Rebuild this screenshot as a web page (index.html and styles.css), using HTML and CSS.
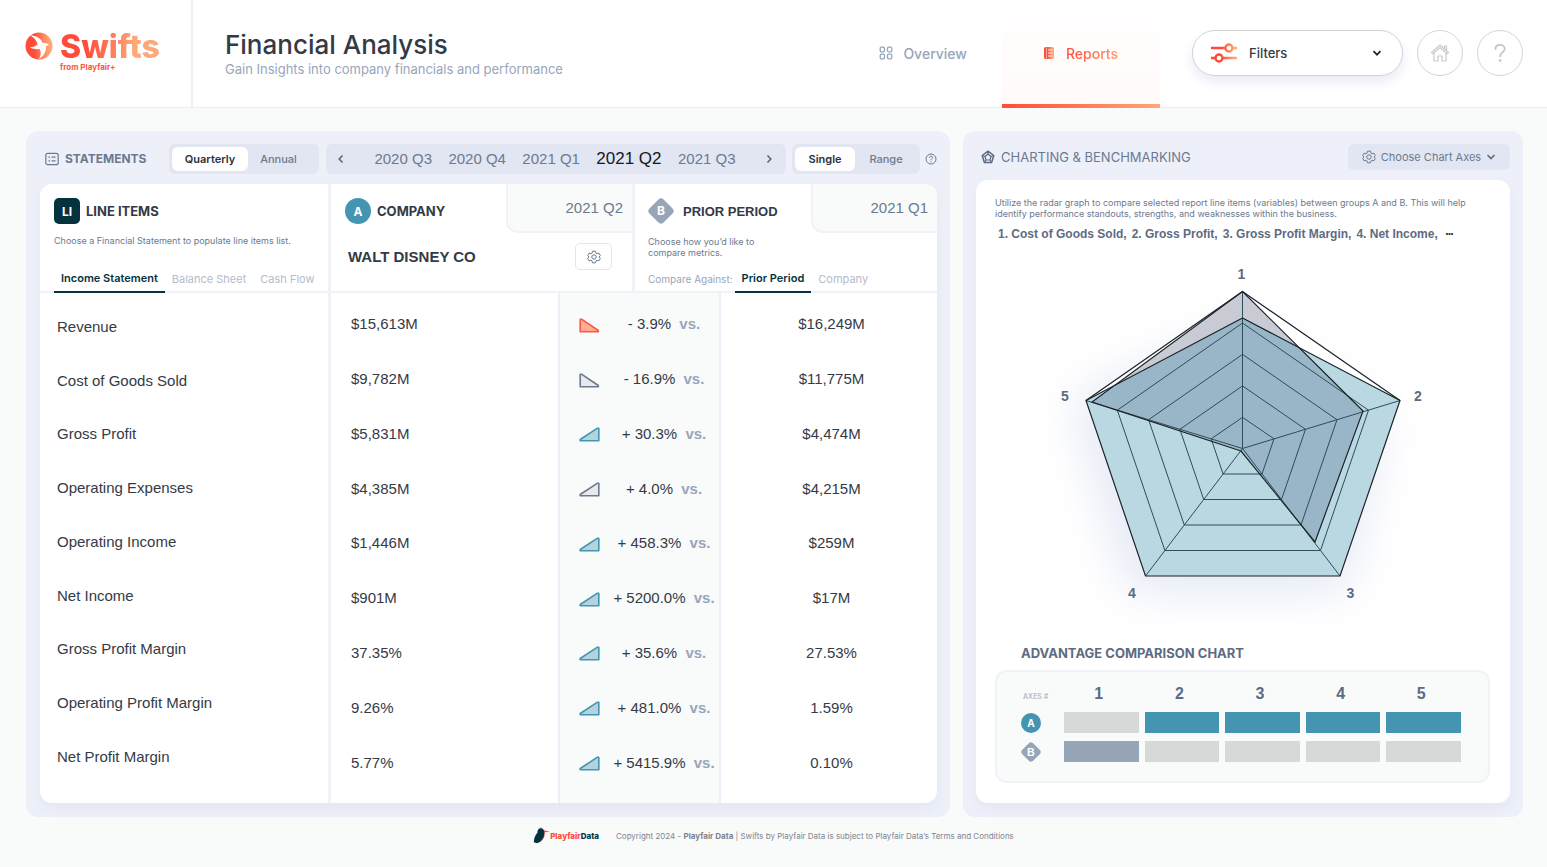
FILE: index.html
```html
<!DOCTYPE html>
<html lang="en">
<head>
<meta charset="utf-8">
<title>Financial Analysis</title>
<link rel="stylesheet" href="styles.css">
</head>
<body>
<header class="topbar">
  <a class="brand" href="#">
    <svg class="brand-mark" viewBox="0 0 28 28" aria-hidden="true">
      <defs><linearGradient id="warm"><stop offset=".3" stop-color="#ff4b3a"/><stop offset=".9" stop-color="#ffa877"/></linearGradient></defs>
      <circle cx="14" cy="14" r="13.500" fill="url(#warm)"/>
      <path d="M5 3.500C11 3.500 16 6 17.500 11C19.500 10.500 22 11 24 13L21 14C21.500 19 19 24 14 27C16 23 16.500 19.500 14.500 17C11 17.500 8 17 5 15.500C8 15 11 14 12.500 12.500C12.500 9 9 5.500 5 3.500Z" fill="#fff"/>
    </svg>
    <span class="brand-text"><span class="brand-name">Swifts</span><span class="brand-sub">from Playfair+</span></span>
  </a>
  <div class="heading">
    <h1>Financial Analysis</h1>
    <p>Gain Insights into company financials and performance</p>
  </div>
  <nav class="nav">
    <a class="nav-link" href="#">
      <svg class="i14" viewBox="0 0 14 14" fill="none" stroke="#97a6ba" stroke-width="1.300"><rect x="1.200" y="1.200" width="4.300" height="4.600" rx="1.200"/><rect x="8.500" y="1.200" width="4.300" height="4.600" rx="1.200"/><rect x="1.200" y="8.200" width="4.300" height="4.600" rx="1.200"/><rect x="8.500" y="8.200" width="4.300" height="4.600" rx="1.200"/></svg>
      Overview</a>
    <a class="nav-link active" href="#">
      <svg class="i14" viewBox="0 0 14 14"><rect x="2" y="1" width="10" height="12" rx="1.800" fill="url(#warm)"/><path d="M4.500 1.500v11" stroke="#fff" stroke-width=".5"/><path d="M6 4h4.500M6 7h4.500M6 10h4.500" stroke="#fff" stroke-width=".9"/></svg>
      <span>Reports</span></a>
  </nav>
  <div class="actions">
    <button class="filters" type="button">
      <svg class="sliders" viewBox="0 0 26 22" fill="none"><defs><linearGradient id="warmLine" gradientUnits="userSpaceOnUse" x1="0" y1="0" x2="26" y2="0"><stop offset=".4" stop-color="#ff4b3a"/><stop offset=".9" stop-color="#ffa877"/></linearGradient></defs><g stroke="url(#warmLine)" stroke-width="2.500"><path d="M0 6H14M22 6H26M0 16H4M12 16H26"/><circle cx="18" cy="6" r="3.500"/><circle cx="8" cy="16" r="3.500"/></g></svg>
      <span>Filters</span>
      <svg class="i10" viewBox="0 0 10 10" fill="none" stroke="#1f2430" stroke-width="1.700"><path d="M1.500 3.200 5 6.700 8.500 3.200"/></svg>
    </button>
    <button class="round" type="button" aria-label="Home"><svg class="i20" viewBox="0 0 20 20" fill="none" stroke="#c9cacd" stroke-width="1.200" stroke-linejoin="round"><path d="M1.500 9.500 10 2l8.500 7.500-1.300 1.200L10 4.500 2.800 10.700ZM4 10v8h4v-5h4v5h4v-8M14.500 5.500V3h2v4.500"/></svg></button>
    <button class="round" type="button" aria-label="Help"><svg class="i20" viewBox="0 0 20 20" fill="none" stroke="#c4c5c9" stroke-width="1.800" stroke-linecap="round"><path d="M5.500 6C5.500 3.200 7.500 1.800 10 1.800S14.700 3.400 14.700 6C14.700 9 10.200 9.500 10.200 13.200"/><circle cx="10.200" cy="17.500" r=".5"/></svg></button>
  </div>
</header>

<main class="page">
  <section class="panel statements">
    <div class="toolbar">
      <h2 class="panel-title strong"><svg class="i14" viewBox="0 0 14 14" fill="none" stroke="#6b7a90" stroke-width="1.200"><rect x=".8" y="1.300" width="12.400" height="11.400" rx="2"/><path d="M3.500 5.200h1.500M6.500 5.200h4M3.500 8.800h1.500M6.500 8.800h4"/></svg>STATEMENTS</h2>
      <div class="segment seg-frequency"><button class="on" type="button">Quarterly</button><button type="button">Annual</button></div>
      <div class="periods">
        <button class="arrow" type="button" aria-label="Previous periods"><svg class="i10" viewBox="0 0 10 10" fill="none" stroke="#5d6a7e" stroke-width="1.600"><path d="M6.500 1.500 3.200 5l3.300 3.500"/></svg></button>
        <button type="button">2020 Q3</button><button type="button">2020 Q4</button><button type="button">2021 Q1</button><button class="current" type="button">2021 Q2</button><button type="button">2021 Q3</button>
        <button class="arrow" type="button" aria-label="Next periods"><svg class="i10" viewBox="0 0 10 10" fill="none" stroke="#5d6a7e" stroke-width="1.600"><path d="M3.500 1.500 6.800 5 3.500 8.500"/></svg></button>
      </div>
      <div class="segment seg-mode"><button class="on" type="button">Single</button><button type="button">Range</button></div>
      <button class="hint" type="button" aria-label="Help"><svg class="i12" viewBox="0 0 12 12" fill="none" stroke="#6b7a90"><circle cx="6" cy="6" r="5"/><path d="M4.400 4.800C4.400 2.600 7.600 2.700 7.600 4.700 7.600 5.900 6 5.800 6 7.300M6 8.300v1"/></svg></button>
    </div>

    <div class="statement">
      <section class="items">
        <div class="col-head">
          <h3><span class="badge badge-li">LI</span>LINE ITEMS</h3>
          <p class="note">Choose a Financial Statement to populate line items list.</p>
          <div class="tabs"><button class="on" type="button">Income Statement</button><button type="button">Balance Sheet</button><button type="button">Cash Flow</button></div>
        </div>
        <table class="item-table">
          <tr><th scope="row">Revenue</th></tr>
          <tr><th scope="row">Cost of Goods Sold</th></tr>
          <tr><th scope="row">Gross Profit</th></tr>
          <tr><th scope="row">Operating Expenses</th></tr>
          <tr><th scope="row">Operating Income</th></tr>
          <tr><th scope="row">Net Income</th></tr>
          <tr><th scope="row">Gross Profit Margin</th></tr>
          <tr><th scope="row">Operating Profit Margin</th></tr>
          <tr><th scope="row">Net Profit Margin</th></tr>
        </table>
      </section>

      <section class="compare">
        <div class="compare-head">
          <div class="col-head company">
            <h3><span class="badge badge-a">A</span>COMPANY</h3>
            <span class="period-tab">2021 Q2</span>
            <div class="company-row"><strong>WALT DISNEY CO</strong>
              <button class="gear" type="button" aria-label="Company settings"><svg class="i14" viewBox="0 0 24 24"><use href="#cog"/></svg></button></div>
          </div>
          <div class="col-head prior">
            <h3><svg class="diamond" viewBox="0 0 26 26" aria-hidden="true"><rect x="3" y="3" width="20" height="20" rx="4" transform="rotate(45 13 13)" fill="#97a5b8"/><text x="13" y="17">B</text></svg><span class="arial">PRIOR PERIOD</span></h3>
            <span class="period-tab">2021 Q1</span>
            <p class="note">Choose how you’d like to<br>compare metrics.</p>
            <div class="tabs"><span class="tabs-label">Compare Against:</span><button class="on" type="button">Prior Period</button><button type="button">Company</button></div>
          </div>
        </div>
        <div class="values">
          <table class="value-table">
            <colgroup><col class="c-company"><col class="c-icon"><col class="c-delta"><col class="c-prior"></colgroup>
            <tr><td>$15,613M</td><td><svg class="trend bad" viewBox="0 0 21 15"><use href="#down"/></svg></td><td>- 3.9% <b>vs.</b></td><td>$16,249M</td></tr>
            <tr><td>$9,782M</td><td><svg class="trend flat" viewBox="0 0 21 15"><use href="#down"/></svg></td><td>- 16.9% <b>vs.</b></td><td>$11,775M</td></tr>
            <tr><td>$5,831M</td><td><svg class="trend good" viewBox="0 0 21 15"><use href="#up"/></svg></td><td>+ 30.3% <b>vs.</b></td><td>$4,474M</td></tr>
            <tr><td>$4,385M</td><td><svg class="trend flat" viewBox="0 0 21 15"><use href="#up"/></svg></td><td>+ 4.0% <b>vs.</b></td><td>$4,215M</td></tr>
            <tr><td>$1,446M</td><td><svg class="trend good" viewBox="0 0 21 15"><use href="#up"/></svg></td><td>+ 458.3% <b>vs.</b></td><td>$259M</td></tr>
            <tr><td>$901M</td><td><svg class="trend good" viewBox="0 0 21 15"><use href="#up"/></svg></td><td>+ 5200.0% <b>vs.</b></td><td>$17M</td></tr>
            <tr><td>37.35%</td><td><svg class="trend good" viewBox="0 0 21 15"><use href="#up"/></svg></td><td>+ 35.6% <b>vs.</b></td><td>27.53%</td></tr>
            <tr><td>9.26%</td><td><svg class="trend good" viewBox="0 0 21 15"><use href="#up"/></svg></td><td>+ 481.0% <b>vs.</b></td><td>1.59%</td></tr>
            <tr><td>5.77%</td><td><svg class="trend good" viewBox="0 0 21 15"><use href="#up"/></svg></td><td>+ 5415.9% <b>vs.</b></td><td>0.10%</td></tr>
          </table>
        </div>
      </section>
    </div>
  </section>

  <section class="panel">
    <div class="toolbar chart-bar">
      <h2 class="panel-title"><svg class="i14" viewBox="0 0 14 14" fill="none" stroke="#5d6b82" stroke-width="1.500" stroke-linejoin="round"><path d="M7 1.200 12.800 5.500 10.600 12.500H3.400L1.200 5.500Z"/><path d="M7 4 10 6.500 9 10H5L4 6.500ZM7 1v3M13 5.500l-3 1M1 5.500l3 1M3.500 12.500 5 10M10.500 12.500 9 10" stroke-width="1.200"/></svg>CHARTING &amp; BENCHMARKING</h2>
      <button class="axes-button" type="button"><svg class="i14" viewBox="0 0 24 24"><use href="#cog"/></svg>Choose Chart Axes<svg class="i10" viewBox="0 0 10 10" fill="none" stroke="#5d6b82" stroke-width="1.600"><path d="M1.500 3 5 6.500 8.500 3"/></svg></button>
    </div>
    <div class="chart-card">
      <p class="note">Utilize the radar graph to compare selected report line items (variables) between groups A and B. This will help identify performance standouts, strengths, and weaknesses within the business.</p>
      <ul class="axes"><li>1. Cost of Goods Sold,</li><li>2. Gross Profit,</li><li>3. Gross Profit Margin,</li><li>4. Net Income,</li><li class="more">•••</li></ul>
      <svg class="radar" viewBox="0 0 496 380" role="img" aria-label="Radar chart of groups A and B">
        <defs><filter id="haze" x="-30%" y="-30%" width="160%" height="160%"><feGaussianBlur stdDeviation="24"/></filter></defs>
        <g transform="translate(-995 -254)">
          <path d="M1242 330 1382 420 1345 590H1130L1075 400Z" fill="#e3e7f5" filter="url(#haze)"/>
          <path d="M1242.500 291.500 1400 400.500 1340 576H1145.500L1086 400.500Z" fill="#fff"/>
          <path d="M1242.500 291.500 1363 411 1315 542 1241 450 1092 402Z" fill="#c9cbd4"/>
          <path d="M1242.500 318 1400 400.500 1340 576H1145.500L1086 400.500Z" fill="#bad8e1"/>
          <path d="M1242.500 318 1299 347 1363 411 1315 542 1241 450 1092 402 1119 384Z" fill="#99b6c8"/>
          <g class="web">
            <path d="M1242.500 417.400 1274 438.800 1262 474H1223.100L1211.200 438.800Z"/>
            <path d="M1242.500 385.900 1305.500 429.300 1281.500 499.500H1203.700L1179.900 429.300Z"/>
            <path d="M1242.500 354.400 1337 419.700 1301 525H1184.300L1148.600 419.700Z"/>
            <path d="M1242.500 323 1368.500 410.200 1320.500 550.500H1164.900L1117.300 410.200Z"/>
            <path d="M1242.500 448.500V291.500M1242.500 448.500 1400 400.500M1242.500 448.500 1340 576M1242.500 448.500 1145.500 576M1242.500 448.500 1086 400.500"/>
          </g>
          <g class="outline">
            <path d="M1242.500 291.500 1400 400.500 1340 576H1145.500L1086 400.500Z"/>
            <path d="M1242.500 318 1400 400.500M1242.500 318 1086 400.500"/>
            <path d="M1242.500 291.500 1363 411 1315 542 1241 451 1092 402Z"/>
          </g>
          <g class="axis-label"><text x="1241.500" y="278.500">1</text><text x="1418" y="400.500">2</text><text x="1350.500" y="597.500">3</text><text x="1132" y="597.500">4</text><text x="1065" y="400.500">5</text></g>
        </g>
      </svg>
      <h3 class="adv-title">ADVANTAGE COMPARISON CHART</h3>
      <div class="adv">
        <table>
          <tr><th class="axes-cell">AXES #</th><th>1</th><th>2</th><th>3</th><th>4</th><th>5</th></tr>
          <tr><th class="group"><span class="badge badge-a small">A</span></th><td><i></i></td><td><i class="a"></i></td><td><i class="a"></i></td><td><i class="a"></i></td><td><i class="a"></i></td></tr>
          <tr><th class="group"><svg class="diamond small" viewBox="0 0 26 26"><rect x="3" y="3" width="20" height="20" rx="4" transform="rotate(45 13 13)" fill="#97a5b8"/><text x="13" y="18">B</text></svg></th><td><i class="b"></i></td><td><i></i></td><td><i></i></td><td><i></i></td><td><i></i></td></tr>
        </table>
      </div>
    </div>
  </section>
</main>

<footer class="foot">
  <a class="foot-brand" href="#"><svg class="woodpecker" viewBox="0 0 17 17"><path d="M5.500 1.500C6.500 .2 9 .3 10 2L7 2.500Z" fill="#97a5b8"/><path d="M11.500 5C12.500 9 10.500 14 4 16.700 8.500 14 10 10 10.500 6ZM10.500 3.300 16.700 4.500 11 5.500Z" fill="#ff4b3a"/><path d="M.8 15.200C1.300 10 2.500 8 4.300 6 4.300 2.800 5.500 1.500 8 1.500 10.200 1.500 11 3 11.200 4.200 11.600 8 10.500 12 7 14.700L4 16.300Z" fill="#04333f"/></svg><span>Playfair</span>Data</a>
  <p>Copyright 2024 - <b>Playfair Data</b> | Swifts by Playfair Data is subject to Playfair Data’s Terms and Conditions</p>
</footer>

<svg class="sprite" aria-hidden="true">
  <symbol id="cog" viewBox="0 0 24 24"><path d="M9.500 2h5l.8 3.200 2 1.200 3.200-1 2.300 4.200-2.300 2.400 2.300 2.400-2.300 4.200-3.200-1-2 1.200-.8 3.200h-5l-.8-3.200-2-1.200-3.200 1-2.300-4.200L3.500 12 1.200 9.600l2.300-4.200 3.200 1 2-1.200Z" fill="none" stroke="#6b7a90" stroke-width="1.700" stroke-linejoin="round"/><circle cx="12" cy="12" r="3.800" fill="none" stroke="#6b7a90" stroke-width="1.700"/></symbol>
  <symbol id="up" viewBox="0 0 21 15"><path d="M1.200 13.800V12.500L18.500 1.200H19.800V13.800Z"/></symbol>
  <symbol id="down" viewBox="0 0 21 15"><path d="M1.200 13.800V1.200H2.500L19.300 12.500V13.800Z"/></symbol>
</svg>
</body>
</html>
```
FILE: styles.css
```css
* { box-sizing: border-box; }
body { margin: 0; background: #f9fbfa; color: #343a46; font-family: Inter, "Liberation Sans", sans-serif; }
h1, h2, h3, p, ul { margin: 0; padding: 0; }
a { color: inherit; text-decoration: none; }
button { margin: 0; padding: 0; border: 0; background: none; color: inherit; font: inherit; cursor: pointer; }
svg { display: block; flex: none; }
table { border-collapse: collapse; }
.sprite { position: absolute; width: 0; height: 0; }
.i10 { width: 10px; height: 10px; }
.i12 { width: 12px; height: 12px; }
.i14 { width: 14px; height: 14px; }
.i20 { width: 20px; height: 20px; }

/* Header */
.topbar { display: flex; height: 108px; background: #fff; border-bottom: 1px solid #ebedf5; padding-right: 24px; }
.brand { display: flex; gap: 7px; width: 193px; padding: 32px 0 0 25px; border-right: 2px solid #f0f1f8; }
.brand-mark { width: 28px; height: 28px; }
.brand-text { display: flex; flex-direction: column; align-items: flex-start; }
.brand-name { font-size: 32px; line-height: 30px; font-weight: 800; background: linear-gradient(90deg, #ff4b3a 25%, #ffa877 75%); background-clip: text; color: transparent; }
.brand-sub { font-size: 8px; line-height: 11px; font-weight: 700; color: #ff5440; }
.heading { padding: 29px 0 0 32px; }
.heading h1 { font-size: 26px; line-height: 32px; font-weight: 500; }
.heading p { font-size: 13px; line-height: 16px; color: #97a6ba; }
.nav { display: flex; margin: 0 0 -1px auto; }
.nav-link { display: flex; align-items: center; gap: 10px; padding: 0 35px 2px; font-size: 14px; font-weight: 500; color: #97a6ba; }
.nav-link.active { padding: 2px 42px 0 40px; border-bottom: 4px solid; border-image: linear-gradient(90deg, #ff4b3a, #ffa877) 1; background: linear-gradient(#fff, #fffaf8); }
.nav-link.active span { background: linear-gradient(90deg, #ff4b3a, #ff9368); background-clip: text; color: transparent; }
.actions { display: flex; align-items: center; gap: 14px; margin-left: 32px; padding-bottom: 1px; }
.filters { display: flex; align-items: center; gap: 12px; width: 211px; height: 46px; padding: 0 20px 0 18px; border: 1px solid #d2d3d9; border-radius: 23px; background: #fff; box-shadow: 0 6px 12px #e9ebf6; font-size: 13px; font-weight: 500; }
.filters span { flex: 1; text-align: left; }
.sliders { width: 26px; height: 22px; }
.round { display: grid; place-items: center; width: 46px; height: 46px; border: 1px solid #d4d5d8; border-radius: 50%; }

/* Panels */
.page { display: grid; grid-template-columns: 924fr 560fr; gap: 13px; padding: 23px 24px 0 26px; }
.panel { display: flex; flex-direction: column; padding: 0 13px 14px; border-radius: 12px; background: #edf0f9; }
.statements { padding-left: 14px; }
.toolbar { display: flex; align-items: center; height: 53px; padding: 4px 0 2px 5px; }
.panel-title { display: flex; align-items: center; gap: 6px; font-size: 13px; font-weight: 400; color: #6b7a90; }
.panel-title.strong { font-size: 12px; font-weight: 700; margin-right: auto; }
.segment { display: flex; height: 30px; padding: 3px; border-radius: 6px; background: #e2e5f2; font-size: 11px; font-weight: 500; color: #6b7a90; }
.segment button { flex: 1; border-radius: 6px; }
.segment .on { background: #fff; color: #2b303b; font-weight: 600; }
.seg-frequency { width: 150px; margin-right: 7px; padding-right: 10px; }
.seg-frequency .on { flex: none; width: 76px; }
.seg-mode { width: 128px; }
.seg-mode .on { flex: none; width: 60px; }
.periods { display: flex; align-items: center; justify-content: space-between; width: 460px; height: 30px; margin-right: 6px; padding: 0 12px 0 10px; border-radius: 6px; background: #e2e5f2; font: 15px "Liberation Sans", Arial, sans-serif; color: #6b7a90; }
.periods .current { font-size: 17px; color: #15181e; }
.periods .arrow:first-child { margin-right: 12px; }
.periods .arrow:last-child { margin-left: 12px; }
.hint { margin-left: 5px; }

/* Statement card */
.statement { display: grid; grid-template-columns: 291fr 606fr; flex: 1; min-height: 619px; overflow: hidden; border-radius: 12px; background: #fff; box-shadow: 0 6px 12px #e3e7f3; }
.items { border-right: 3px solid #f1f2f9; }
.col-head { position: relative; height: 109px; padding: 14px 0 0 14px; border-bottom: 2px solid #f1f2f9; }
.col-head h3 { display: flex; align-items: center; gap: 6px; height: 26px; font-size: 13px; font-weight: 700; }
.badge { display: grid; place-items: center; width: 26px; height: 26px; color: #fff; font-size: 12px; font-weight: 700; }
.badge-li { border-radius: 5px; background: #04333f; }
.badge-a { border-radius: 50%; background: #4495b2; }
.diamond { width: 26px; height: 26px; }
.diamond text { fill: #fff; font-size: 12px; font-weight: 700; text-anchor: middle; }
.small { width: 20px; height: 20px; font-size: 10px; }
.diamond.small text { font-size: 14px; }
.note { font-size: 9px; line-height: 11px; color: #6b7a90; }
.items .note { margin-top: 11px; }
.tabs { position: absolute; bottom: -2px; display: flex; align-items: stretch; height: 29px; font-size: 11px; color: #b3bccb; }
.tabs button { padding: 0 7px; white-space: nowrap; }
.tabs .on { border-bottom: 2px solid #04333f; color: #04333f; font-weight: 600; }
.tabs-label { align-self: center; margin-right: 2px; font-size: 10px; color: #97a6ba; }
.arial { font-family: "Liberation Sans", Arial, sans-serif; }
.compare { display: flex; flex-direction: column; }
.compare-head { display: grid; grid-template-columns: 304fr 302fr; }
.company { border-right: 3px solid #f1f2f9; }
.prior { padding-left: 13px; }
.prior h3 { gap: 9px; }
.prior .note { margin-top: 12px; }
.period-tab { position: absolute; top: 0; right: 0; width: 126px; height: 49px; padding: 15px 9px 0 0; border: solid #f1f2f9; border-width: 0 0 2px 2px; border-radius: 0 0 0 12px; background: #f9fbfa; font: 15px "Liberation Sans", Arial, sans-serif; color: #6b7a90; text-align: right; }
.company-row { display: flex; align-items: center; justify-content: space-between; margin-top: 19px; padding: 0 20px 0 3px; font: 15px "Liberation Sans", Arial, sans-serif; }
.gear { display: grid; place-items: center; width: 37px; height: 27px; border: 1px solid #e2e5f0; border-radius: 5px; }

.item-table, .value-table { width: 100%; font: 15px/18px "Liberation Sans", Arial, sans-serif; }
.item-table { height: 484px; margin-top: 7px; }
.item-table th { padding: 0 0 0 17px; font-weight: 400; text-align: left; }
.values { flex: 1; background: linear-gradient(90deg, transparent 227px, #eceff7 227px 229px, #f9fbfa 229px 388px, #eceff7 388px 390px, transparent 390px); }
.value-table { height: 493px; margin-top: 4px; table-layout: fixed; }
.value-table td { padding: 0; text-align: center; white-space: nowrap; }
.value-table td:first-child { padding-left: 20px; text-align: left; }
.value-table td:nth-child(2) { padding-left: 10px; }
.value-table td:last-child { padding-left: 8px; }
.value-table b { margin-left: 4px; color: #97a6ba; }
.c-company { width: 227px; }
.c-icon { width: 52px; }
.c-delta { width: 108px; }
.trend { width: 21px; height: 15px; margin: 2px auto 0; stroke-width: 1.6; stroke-linejoin: round; }
.good { fill: #b5d3de; stroke: #4495b2; }
.flat { fill: #e8e9ed; stroke: #6b7a90; }
.bad { fill: #ffad98; stroke: #ff563f; }

/* Chart card */
.chart-bar { justify-content: space-between; height: 49px; padding: 2px 0 0 5px; }
.axes-button { display: flex; align-items: center; justify-content: center; gap: 5px; width: 162px; height: 26px; border-radius: 6px; background: #e2e5f2; color: #6b7a90; font-size: 11px; }
.chart-card { flex: 1; padding: 17px 19px 19px; border-radius: 12px; background: #fff; box-shadow: 0 6px 12px #e3e7f3; }
.axes { display: flex; gap: 5px; margin: 6px 0 0 3px; list-style: none; font: bold 12px/18px "Liberation Sans", Arial, sans-serif; color: #5d6b82; }
.axes .more { margin-left: 3px; font-size: 7px; color: #15181e; }
.radar { width: 100%; margin-top: 11px; overflow: visible; }
.web path { fill: none; stroke: #2c4d5a; stroke-width: 1; }
.outline path { fill: none; stroke: #1b2228; stroke-width: 1.2; }
.axis-label text { fill: #5d6b82; font: bold 14px "Liberation Sans", Arial, sans-serif; text-anchor: middle; }
.adv-title { margin: 11px 0 9px 26px; font-size: 13px; line-height: 16px; font-weight: 700; color: #5d6b82; }
.adv { height: 113px; margin-right: 1px; padding: 7px 24px 0 20px; border: 2px solid #f1f2f9; border-radius: 12px; background: #f9fbfa; }
.adv table { width: 100%; table-layout: fixed; }
.adv tr { height: 29px; }
.adv td, .adv th { padding: 0 3px; }
.adv th { padding-right: 8px; font: bold 16px "Liberation Sans", Arial, sans-serif; color: #5d6b82; }
.adv .axes-cell { width: 44px; padding: 6px 0 0 6px; font: 600 7px Inter, sans-serif; color: #b3bccb; white-space: nowrap; text-align: left; }
.adv .group { padding: 0 0 0 4px; }
.adv .group .badge { font-family: Inter, sans-serif; font-size: 10px; color: #fff; }
.adv i { display: block; height: 21px; background: #d7d8d8; }
.adv .a { background: #4495b2; }
.adv .b { background: #97a5b8; }

/* Footer */
.foot { display: flex; align-items: center; justify-content: center; gap: 17px; margin-top: 10px; font-size: 8px; color: #7d8490; }
.foot-brand { display: flex; align-items: center; font-size: 8px; font-weight: 800; color: #04333f; }
.foot-brand span { color: #ff4b3a; }
.woodpecker { width: 17px; height: 17px; }
```
